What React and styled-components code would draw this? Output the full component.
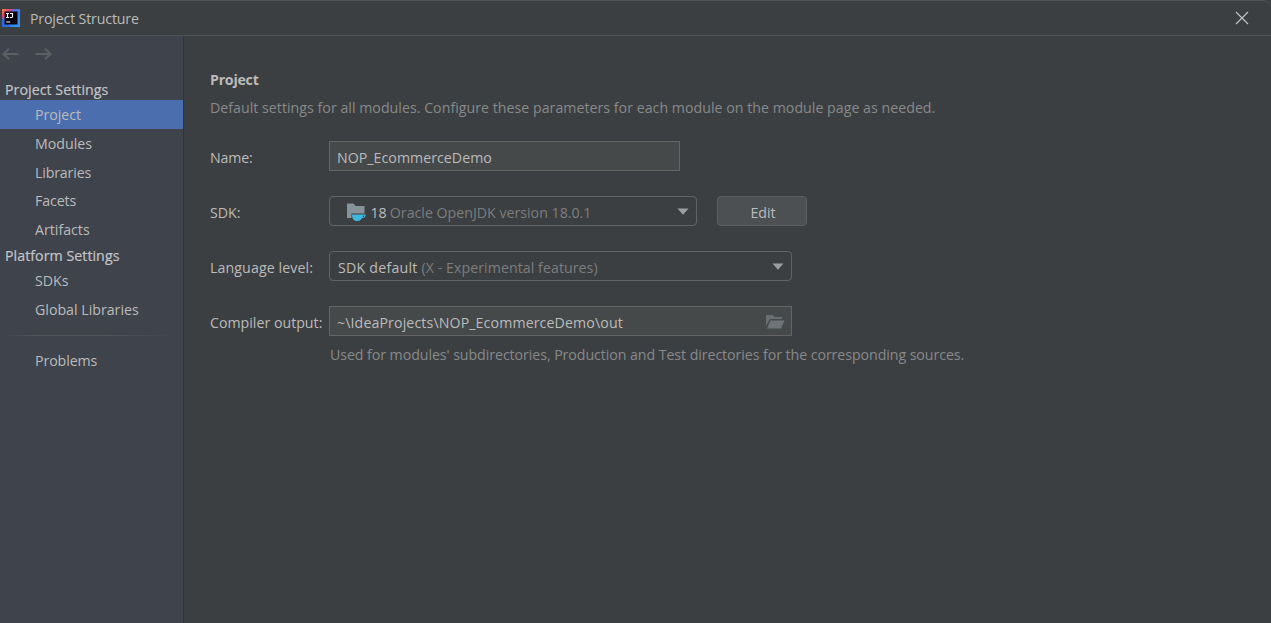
import React from 'react';
import styled, { createGlobalStyle } from 'styled-components';

const Global = createGlobalStyle`
  *, *::before, *::after { box-sizing: border-box; }
  body {
    margin: 0;
    background: #3c3f41;
    color: #bbbbbb;
    font: 14.2px/20px "Open Sans", "Noto Sans", sans-serif;
    overflow: hidden;
  }
`;

const Dialog = styled.div`
  height: 100vh;
  display: flex;
  flex-direction: column;
  background: #3c3f41;
`;

const TitleBar = styled.header`
  display: flex;
  align-items: center;
  height: 36px;
  flex: none;
  padding: 0 22px 0 2px;
  border-top: 1px solid #515456;
  border-bottom: 1px solid #515456;
  border-top-right-radius: 8px;
`;

const Title = styled.h1`
  flex: 1;
  margin: 0 0 0 10px;
  padding-top: 2px;
  font-size: 14.2px;
  font-weight: 400;
  letter-spacing: ${(p) => p.$track || 0}px;
`;

const Body = styled.div`
  display: flex;
  flex: 1;
  min-height: 0;
`;

const Sidebar = styled.nav`
  width: 184px;
  flex: none;
  background: #3f434c;
  border-right: 1px solid #323437;
`;

const History = styled.div`
  display: flex;
  gap: 16px;
  height: 42px;
  padding: 10px 0 0 2px;
`;

const GroupTitle = styled.div`
  height: ${(p) => p.$height}px;
  padding-left: 5px;
  line-height: 23px;
  color: #c3c5c8;
  -webkit-text-stroke: 0.2px #c3c5c8;
  letter-spacing: ${(p) => p.$track || 0}px;
`;

const NavItem = styled.div`
  height: 28.75px;
  padding-left: 35px;
  line-height: 29px;
  letter-spacing: ${(p) => p.$track || 0}px;
  background: ${(p) => (p.$active ? '#4b6eaf' : 'transparent')};
`;

const Separator = styled.div`
  height: 1px;
  margin: 11px 10px 10px 3px;
  background: linear-gradient(90deg, transparent, #52565b 20%, #52565b 60%, transparent);
`;

const Content = styled.main`
  flex: 1;
  padding: 34px 0 0 26px;
`;

const Heading = styled.h2`
  margin: 0;
  font-size: 14.2px;
  line-height: 20px;
  font-weight: 700;
  letter-spacing: ${(p) => p.$track || 0}px;
`;

const Hint = styled.p`
  margin: ${(p) => p.$margin};
  color: #87898b;
  letter-spacing: ${(p) => p.$track || 0}px;
  white-space: nowrap;
`;

const Row = styled.div`
  display: flex;
  align-items: center;
  height: 30px;
  margin-bottom: 25px;
`;

const Label = styled.label`
  width: 119px;
  flex: none;
  padding-top: 3px;
  white-space: nowrap;
  letter-spacing: ${(p) => p.$track || 0}px;
`;

const Field = styled.div`
  display: flex;
  align-items: center;
  width: ${(p) => p.$width}px;
  height: 30px;
  padding: 2px 8px 0 7px;
  border: 1px solid #646464;
  background: #45494a;
`;

const Select = styled(Field)`
  padding-left: 8px;
  border-radius: 4px;
  background: transparent;
`;

const Value = styled.span`
  padding-top: 1px;
  white-space: pre;
  color: ${(p) => (p.$muted ? '#7b7d7f' : '#bbbbbb')};
  letter-spacing: ${(p) => p.$track || 0}px;
`;

const Spacer = styled.span`
  flex: 1;
`;

const Button = styled.button`
  width: 90px;
  height: 30px;
  margin-left: 20px;
  padding: 3px 0 0 2px;
  border: 1px solid #5e6060;
  border-radius: 4px;
  background: #4c5052;
  color: #bbbbbb;
  font: inherit;
`;

const Icon = styled.svg`
  display: block;
  flex: none;
  margin: ${(p) => p.$margin || 0};
`;

const IdeaLogo = () => (
  <Icon width="18" height="18" viewBox="0 0 18 18">
    <defs>
      <linearGradient id="idea" x1="0" y1="0" x2="1" y2="1">
        <stop offset="0" stopColor="#fc8a3a" />
        <stop offset="0.22" stopColor="#e0457b" />
        <stop offset="0.42" stopColor="#3d7cf0" />
        <stop offset="1" stopColor="#2c9bf5" />
      </linearGradient>
    </defs>
    <rect width="18" height="18" fill="url(#idea)" />
    <path d="M0 9 9 18H0Z" fill="#2a6fe0" />
    <rect x="2.5" y="2.5" width="13" height="13" fill="#0c0410" />
    <path
      d="M4 4.5h3M5.5 4.5v4M4 8.5h3M8 4.5h2.500v2.900q0 1.100-1.100 1.100H7.800M4.200 13h4"
      fill="none"
      stroke="#fff"
      strokeWidth="1.1"
    />
  </Icon>
);

const Arrow = ({ right }) => (
  <Icon width="17" height="16" viewBox="0 0 17 16">
    <path
      d={right ? 'M0.5 8H15.5M10 2.8 15.5 8 10 13.2' : 'M16.5 8H1.5M7 2.8 1.5 8 7 13.2'}
      fill="none"
      stroke="#5d5f63"
      strokeWidth="2"
    />
  </Icon>
);

const CloseIcon = () => (
  <Icon width="14" height="14" viewBox="0 0 14 14" $margin="0 0 1px">
    <path d="M1 1 13 13M13 1 1 13" stroke="#c0c0c0" strokeWidth="1.2" />
  </Icon>
);

const Chevron = () => (
  <Icon width="12" height="7" viewBox="0 0 12 7" $margin="0 -0.5px 1px 0">
    <path d="M0.5 0.5h11L6 6.7Z" fill="#9b9ea0" />
  </Icon>
);

const JdkIcon = () => (
  <Icon width="20" height="19" viewBox="0 0 20 19" $margin="0 3.5px 0 9px">
    <path d="M0 0.5h6.500l2 2.500H17.500V10.500H4.500V15H0Z" fill="#87939a" />
    <path d="M5 11.500H18.500Q19.200 14.800 14.900 15.300Q13.500 18 11.500 18H8.800Q5 17 5 11.500Z" fill="#40b6e0" />
    <path d="M16 12.700h1.400q0 1.200-1.700 1.400Z" fill="#3c3f41" />
  </Icon>
);

const FolderIcon = () => (
  <Icon width="19" height="14" viewBox="0 0 19 14" $margin="0 -2px 1px 0">
    <path d="M0 0h6.500l2 2H16v2H4L0 11Z" fill="#696e71" />
    <path d="M4.500 5.500H18.500L15 13.500H1Z" fill="#6e7578" />
  </Icon>
);

export default function App() {
  return (
    <>
      <Global />
      <Dialog>
        <TitleBar>
          <IdeaLogo />
          <Title $track={-0.17}>Project Structure</Title>
          <CloseIcon />
        </TitleBar>
        <Body>
          <Sidebar>
            <History>
              <Arrow />
              <Arrow right />
            </History>
            <GroupTitle $height={22} $track={0.05}>Project Settings</GroupTitle>
            <NavItem $active $track={-0.05}>Project</NavItem>
            <NavItem>Modules</NavItem>
            <NavItem $track={-0.15}>Libraries</NavItem>
            <NavItem $track={-0.1}>Facets</NavItem>
            <NavItem>Artifacts</NavItem>
            <GroupTitle $height={22.5} $track={0.05}>Platform Settings</GroupTitle>
            <NavItem>SDKs</NavItem>
            <NavItem>Global Libraries</NavItem>
            <Separator />
            <NavItem $track={-0.1}>Problems</NavItem>
          </Sidebar>
          <Content>
            <Heading $track={-0.25}>Project</Heading>
            <Hint $margin="8px 0 23px" $track={0.019}>
              Default settings for all modules. Configure these parameters for each module on the module page as needed.
            </Hint>
            <Row>
              <Label $track={-0.15}>Name:</Label>
              <Field $width={351}>
                <Value $track={0.03}>NOP_EcommerceDemo</Value>
              </Field>
            </Row>
            <Row>
              <Label>SDK:</Label>
              <Select $width={368}>
                <JdkIcon />
                <Value $track={-0.2}>18 </Value>
                <Value $muted>Oracle OpenJDK version 18.0.1</Value>
                <Spacer />
                <Chevron />
              </Select>
              <Button>Edit</Button>
            </Row>
            <Row>
              <Label $track={0.1}>Language level:</Label>
              <Select $width={463}>
                <Value $track={0.23}>SDK default </Value>
                <Value $muted $track={0.05}>(X - Experimental features)</Value>
                <Spacer />
                <Chevron />
              </Select>
            </Row>
            <Row>
              <Label>Compiler output:</Label>
              <Field $width={463}>
                <Value $track={0.11}>~\IdeaProjects\NOP_EcommerceDemo\out</Value>
                <Spacer />
                <FolderIcon />
              </Field>
            </Row>
            <Hint $margin="-16px 0 0 120px" $track={-0.067}>
              Used for modules' subdirectories, Production and Test directories for the corresponding sources.
            </Hint>
          </Content>
        </Body>
      </Dialog>
    </>
  );
}
